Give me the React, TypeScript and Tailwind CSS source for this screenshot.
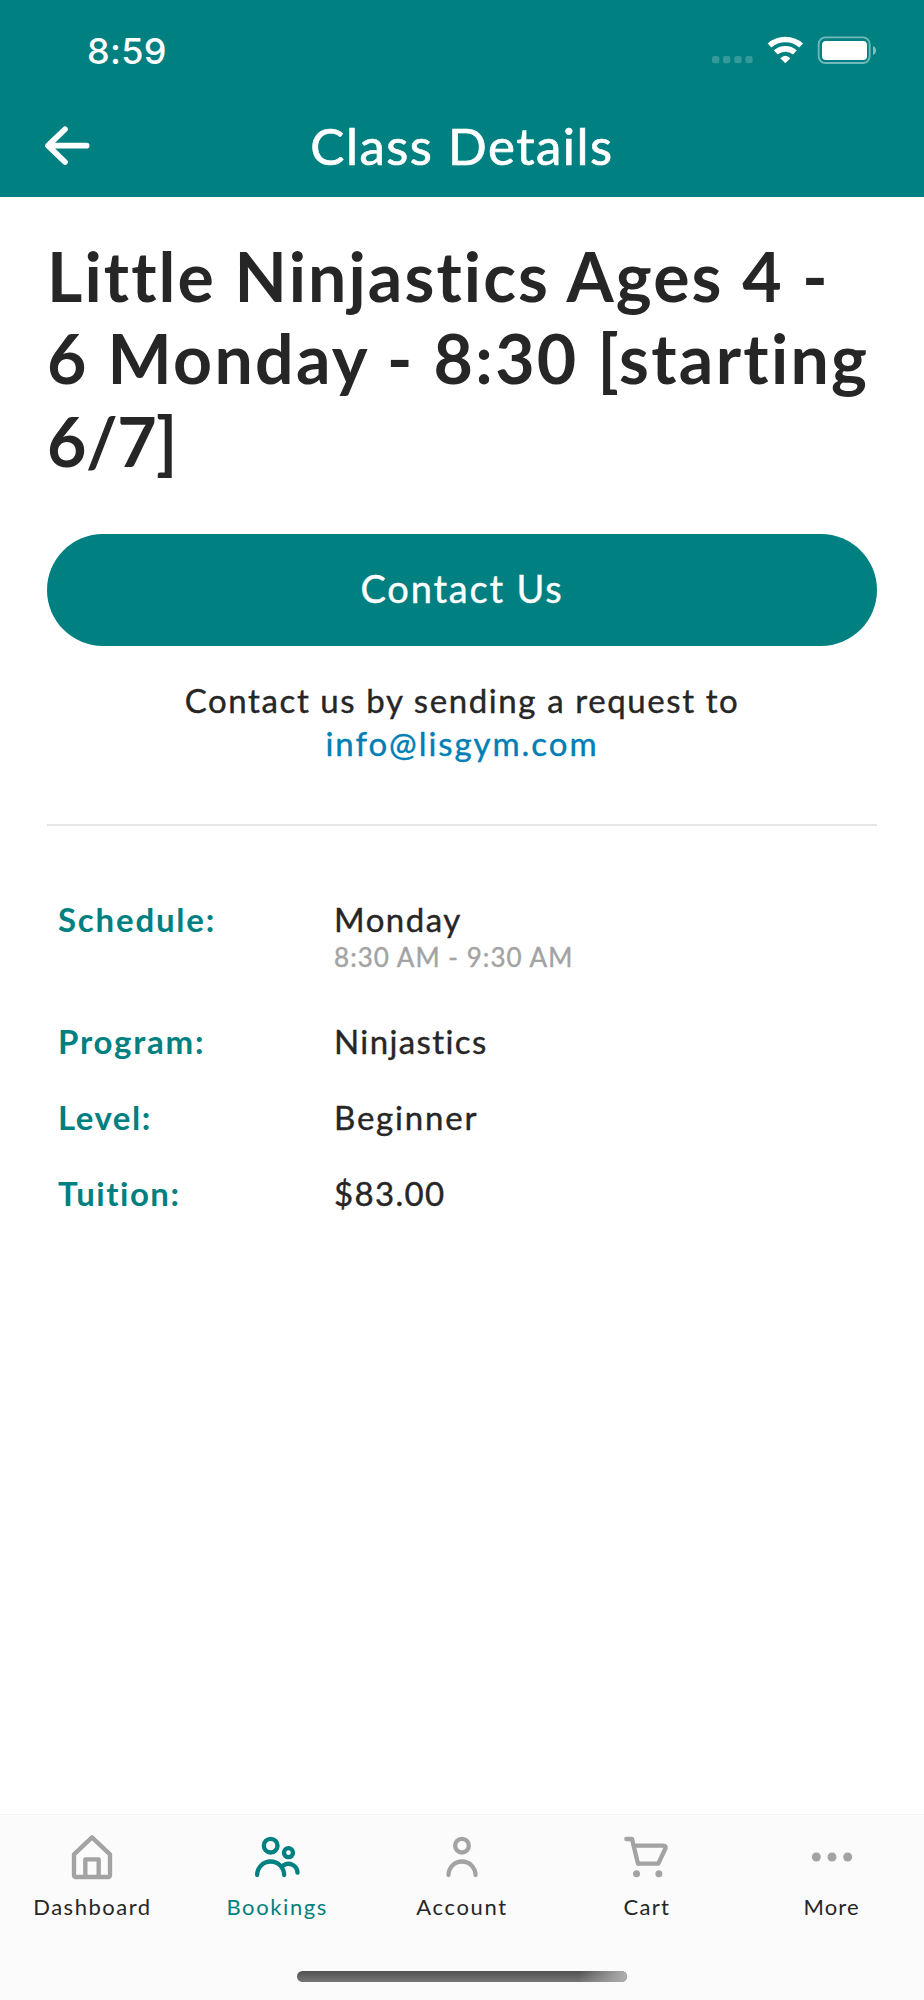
import React from 'react';

type IconProps = { children: React.ReactNode };

const TabIcon: React.FC<IconProps> = ({ children }) => (
    <svg
        viewBox="0 0 144 144"
        className="w-12 h-12"
        fill="none"
        stroke="currentColor"
        strokeWidth={13}
        strokeLinecap="round"
        strokeLinejoin="round"
    >
        {children}
    </svg>
);

const HomeIcon = () => (
    <TabIcon>
        <path d="M18 64 L72 13 L126 64 V126 Q126 132 120 132 H24 Q18 132 18 126 Z" />
        <path d="M52 130 V79 H92 V130" strokeLinecap="butt" />
    </TabIcon>
);

const PeopleIcon = () => (
    <TabIcon>
        <circle cx="53" cy="38" r="20.5" />
        <circle cx="106.4" cy="59" r="13.5" />
        <path d="M12.4 126 A40.5 40.5 0 0 1 93.4 126" />
        <path d="M91.4 97 A27 27 0 0 1 133.4 119" />
    </TabIcon>
);

const PersonIcon = () => (
    <TabIcon>
        <circle cx="72" cy="38" r="20.5" />
        <path d="M31.5 126 A40.5 40.5 0 0 1 112.5 126" />
    </TabIcon>
);

const CartIcon = () => (
    <TabIcon>
        <path d="M10 18 H27 L45 92 H106 L126.5 48 Q131 38 121 38 H32" />
        <g fill="currentColor" stroke="none">
            <circle cx="40.6" cy="122" r="10.5" />
            <circle cx="107.6" cy="122" r="10.5" />
        </g>
    </TabIcon>
);

const MoreIcon = () => (
    <TabIcon>
        <g fill="currentColor" stroke="none">
            <circle cx="25" cy="72" r="13.5" />
            <circle cx="72" cy="72" r="13.5" />
            <circle cx="119" cy="72" r="13.5" />
        </g>
    </TabIcon>
);

const StatusIcons = () => (
    <svg viewBox="744 102 506 96" className="w-[168.67px] h-8" fill="white">
        <g opacity="0.2">
            <rect x="750" y="168" width="22" height="22" rx="7" />
            <rect x="783" y="168" width="22" height="22" rx="7" />
            <rect x="817" y="168" width="22" height="22" rx="7" />
            <rect x="850" y="168" width="22" height="22" rx="7" />
        </g>
        <g fill="none" stroke="white" strokeWidth="17">
            <path d="M922.6 136.5 A71.5 71.5 0 0 1 1017.4 136.5" />
            <path d="M941.2 157.4 A43.5 43.5 0 0 1 998.8 157.4" />
        </g>
        <path d="M970 190 L954.8 175 Q970 160 985.2 175 Z" />
        <rect x="1070" y="112" width="153" height="77" rx="20" fill="none" stroke="white" strokeWidth="5.5" opacity="0.45" />
        <rect x="1080" y="123" width="135" height="57" rx="12" />
        <path d="M1233 138 Q1242 142 1242 151.5 Q1242 161 1233 165 Z" opacity="0.5" />
    </svg>
);

const BackArrow = () => (
    <svg viewBox="0 0 138 122" className="w-[46px] h-auto" fill="none" stroke="white" strokeWidth={17} strokeLinecap="round" strokeLinejoin="round">
        <path d="M63 13 L12 62 L63 111 M14 62 H128" />
    </svg>
);

const details = [
    { label: 'Schedule:', value: 'Monday', note: '8:30 AM - 9:30 AM', className: 'h-[122.8px]', labelClass: 'tracking-[1.8px]', valueClass: 'tracking-[1.5px]' },
    { label: 'Program:', value: 'Ninjastics', className: 'h-[75.7px]', labelClass: 'tracking-[1.75px]', valueClass: 'tracking-[1.4px]' },
    { label: 'Level:', value: 'Beginner', className: 'h-[75.7px]', labelClass: 'tracking-[1.5px]', valueClass: 'tracking-[1.8px]' },
    { label: 'Tuition:', value: '$83.00', className: 'h-[75.7px]', labelClass: 'tracking-[1.5px]', valueClass: 'tracking-[1.35px]' },
];

const tabs = [
    { label: 'Dashboard', icon: HomeIcon, tracking: 'tracking-[1.5px]' },
    { label: 'Bookings', icon: PeopleIcon, active: true, tracking: 'tracking-[1.6px]' },
    { label: 'Account', icon: PersonIcon, tracking: 'tracking-[1.65px]' },
    { label: 'Cart', icon: CartIcon, tracking: 'tracking-[1.3px]' },
    { label: 'More', icon: MoreIcon, tracking: 'tracking-[1.1px]' },
];

const App: React.FC = () => (
    <div className="w-[924px] h-[2000px] flex flex-col bg-white text-[#262626] font-['Lato',sans-serif] overflow-hidden">
        <header className="h-[196.5px] shrink-0 bg-[#008080] text-white">
            <div className="h-[97px] flex items-start justify-between pl-[87px] pr-[45.33px]">
                <span className="mt-[29px] font-['Inter',sans-serif] font-medium text-[36px] leading-[44px] tracking-[0.3px]">8:59</span>
                <div className="mt-[34px]">
                    <StatusIcons />
                </div>
            </div>
            <div className="h-[98px] grid grid-cols-[200px_1fr_200px] items-center">
                <button aria-label="Back" className="pl-[44px] pb-px">
                    <BackArrow />
                </button>
                <h1 className="text-center whitespace-nowrap text-[51px] leading-[98px] tracking-[1.5px] [-webkit-text-stroke:0.7px]">Class Details</h1>
            </div>
        </header>

        <main className="flex-1 px-[47px] pt-[38px]">
            <h2 className="font-bold text-[68px] leading-[82.5px] whitespace-nowrap">
                <span className="block tracking-[2.1px]">Little Ninjastics Ages 4 -</span>
                <span className="block tracking-[2.3px]">6 Monday - 8:30 [starting</span>
                <span className="block tracking-[-0.5px]">6/7]</span>
            </h2>
            <button className="mt-[52px] w-full h-[112px] rounded-full bg-[#008080] text-white text-[38px] leading-[109px] pb-[3px] tracking-[1.8px] [-webkit-text-stroke:0.4px]">
                Contact Us
            </button>
            <p className="mt-[33px] text-center text-[33px] leading-[42.5px] [-webkit-text-stroke:0.4px]">
                <span className="block tracking-[1.6px]">Contact us by sending a request to</span>
                <a className="block text-[#007eb5] tracking-[1.95px]">info@lisgym.com</a>
            </p>
            <hr className="mt-[60px] border-0 h-[1.5px] bg-[#e5e5e5]" />

            <dl className="mt-[74px] pl-[11px]">
                {details.map(({ label, value, note, className, labelClass, valueClass }) => (
                    <div key={label} className={`flex text-[33px] leading-[38px] ${className}`}>
                        <dt className={`w-[276px] font-bold text-[#008080] ${labelClass}`}>{label}</dt>
                        <dd className="[-webkit-text-stroke:0.4px]">
                            <div className={valueClass}>{value}</div>
                            {note && <div className="text-[26px] leading-[38px] text-[#a3a3a3] tracking-[1.05px]">{note}</div>}
                        </dd>
                    </div>
                ))}
            </dl>
        </main>

        <nav className="h-[186.5px] shrink-0 bg-[#fbfbfb] border-t border-[#f5f5f5] flex flex-col items-center">
            <div className="w-full grid grid-cols-5 pt-[18.5px]">
                {tabs.map(({ label, icon: Icon, active, tracking }) => (
                    <a key={label} className={`flex flex-col items-center ${active ? 'text-[#008080]' : 'text-[#a3a3a3]'}`}>
                        <Icon />
                        <span className={`mt-3 text-[22px] leading-[28px] ${tracking} ${active ? 'text-[#008080]' : 'text-[#262626]'}`}>{label}</span>
                    </a>
                ))}
            </div>
            <div className="mt-[50px] w-[330px] h-[11px] rounded-full bg-gradient-to-b from-[#505050] to-[#777777] overflow-hidden">
                <div className="ml-auto w-[48px] h-full bg-gradient-to-r from-[#b0b0b0]/0 to-[#b0b0b0]" />
            </div>
        </nav>
    </div>
);

export default App;
